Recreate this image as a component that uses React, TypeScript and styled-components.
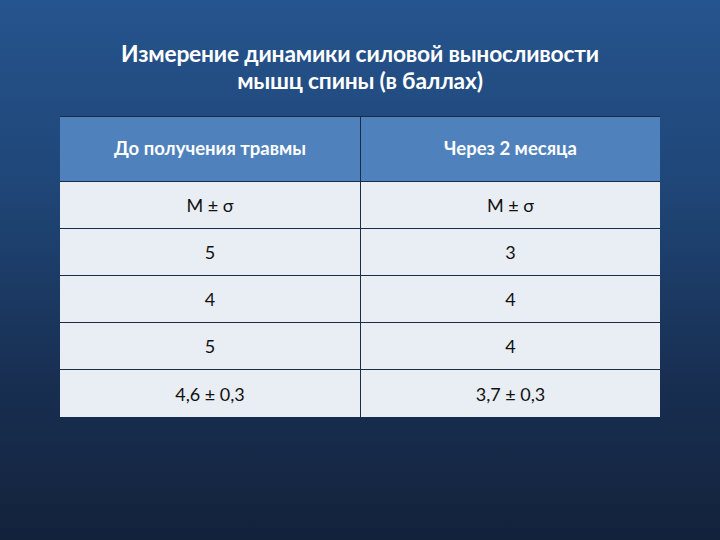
import React from "react";
import styled, { createGlobalStyle } from "styled-components";

const Global = createGlobalStyle`
  html, body { margin: 0; padding: 0; }
  body { width: 720px; height: 540px; overflow: hidden; }
`;

const Slide = styled.div`
  width: 720px;
  height: 540px;
  box-sizing: border-box;
  background: linear-gradient(180deg, #26548e 0%, #1f4677 35%, #182f52 70%, #13223b 100%);
  font-family: Lato, "Open Sans", sans-serif;
  display: flex;
  flex-direction: column;
  align-items: center;
  padding-top: 40px;
`;

const Title = styled.h1`
  margin: 0;
  color: #ffffff;
  font-size: 22.8px;
  font-weight: 700;
  line-height: 27px;
  text-align: center;
  letter-spacing: -0.2px;
`;

const Table = styled.div`
  margin-top: 22px;
  width: 600px;
  display: grid;
  grid-template-columns: 300px 300px;
  border-top: 1px solid #1a2c48;
`;

const HeadCell = styled.div<{ $right?: boolean }>`
  height: 65px;
  background: #4f81bd;
  color: #ffffff;
  font-weight: 700;
  font-size: 18.5px;
  display: flex;
  align-items: center;
  justify-content: center;
  border-left: ${(p) => (p.$right ? "1px solid #1a2c48" : "none")};
  border-bottom: 1px solid #1a2c48;
  box-sizing: border-box;
  padding-bottom: 2px;
`;

const Cell = styled.div<{ $right?: boolean; $last?: boolean }>`
  height: 47px;
  background: #e9edf4;
  color: #111111;
  font-size: 18px;
  display: flex;
  align-items: center;
  justify-content: center;
  border-left: ${(p) => (p.$right ? "1px solid #1a2c48" : "none")};
  border-bottom: ${(p) => (p.$last ? "none" : "1px solid #1a2c48")};
  box-sizing: border-box;
`;

const rows = [
  ["M ± σ", "M ± σ"],
  ["5", "3"],
  ["4", "4"],
  ["5", "4"],
  ["4,6 ± 0,3", "3,7 ± 0,3"],
];

export default function App() {
  return (
    <>
      <Global />
      <Slide>
        <Title>
          Измерение динамики силовой выносливости
          <br />
          мышц спины (в баллах)
        </Title>
        <Table>
          <HeadCell>До получения травмы</HeadCell>
          <HeadCell $right>Через 2 месяца</HeadCell>
          {rows.map((r, i) => (
            <React.Fragment key={i}>
              <Cell $last={i === rows.length - 1}>{r[0]}</Cell>
              <Cell $right $last={i === rows.length - 1}>{r[1]}</Cell>
            </React.Fragment>
          ))}
        </Table>
      </Slide>
    </>
  );
}
